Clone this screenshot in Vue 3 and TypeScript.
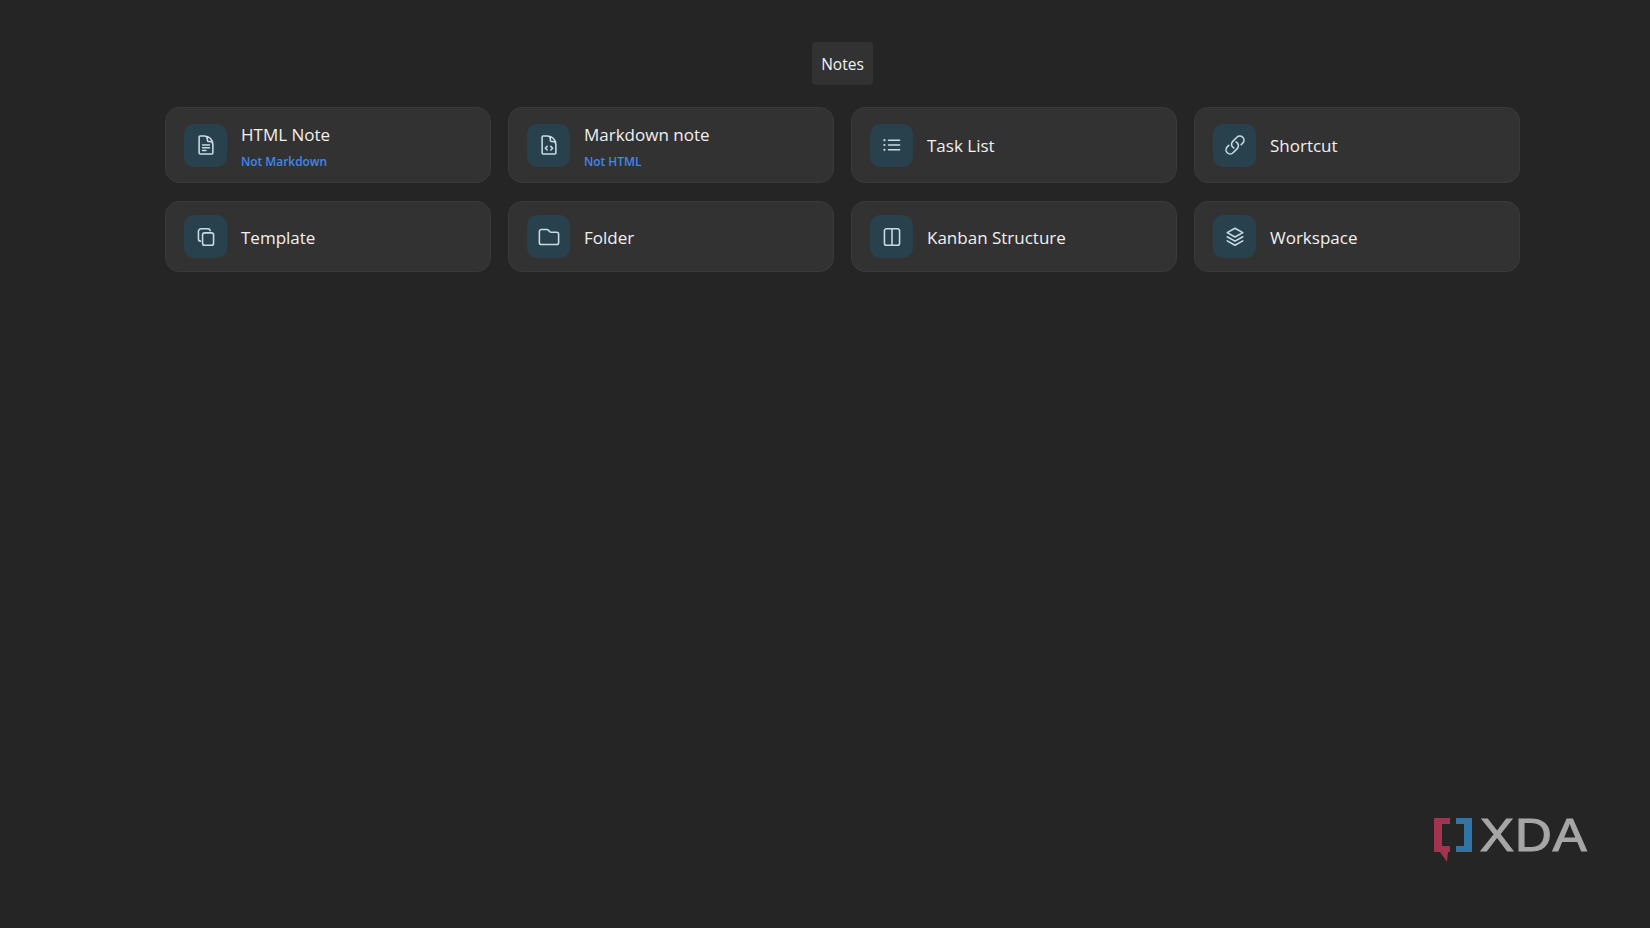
<script setup lang="ts">
type NoteType = {
  title: string;
  hint?: string;
  icon: string;
};

const noteTypes: NoteType[] = [
  {
    title: "HTML Note",
    hint: "Not Markdown",
    icon: "M19.5 14.25v-2.625a3.375 3.375 0 0 0-3.375-3.375h-1.5A1.125 1.125 0 0 1 13.5 7.125v-1.5a3.375 3.375 0 0 0-3.375-3.375H8.25m0 9.75h7.5m-7.5 3h7.5m-7.5 3H12M10.5 2.25H5.625c-.621 0-1.125.504-1.125 1.125v17.25c0 .621.504 1.125 1.125 1.125h12.75c.621 0 1.125-.504 1.125-1.125V11.25a9 9 0 0 0-9-9Z",
  },
  {
    title: "Markdown note",
    hint: "Not HTML",
    icon: "M19.5 14.25v-2.625a3.375 3.375 0 0 0-3.375-3.375h-1.5A1.125 1.125 0 0 1 13.5 7.125v-1.5a3.375 3.375 0 0 0-3.375-3.375H8.25M10.5 2.25H5.625c-.621 0-1.125.504-1.125 1.125v17.25c0 .621.504 1.125 1.125 1.125h12.75c.621 0 1.125-.504 1.125-1.125V11.25a9 9 0 0 0-9-9ZM10 13.5l-2 2 2 2M14 13.5l2 2-2 2",
  },
  {
    title: "Task List",
    icon: "M8.25 6.75h12M8.25 12h12m-12 5.25h12M3.75 6.75h.007v.008H3.75V6.75Zm.375 0a.375.375 0 1 1-.75 0 .375.375 0 0 1 .75 0ZM3.75 12h.007v.008H3.75V12Zm.375 0a.375.375 0 1 1-.75 0 .375.375 0 0 1 .75 0Zm-.375 5.25h.007v.008H3.75v-.008Zm.375 0a.375.375 0 1 1-.75 0 .375.375 0 0 1 .75 0Z",
  },
  {
    title: "Shortcut",
    icon: "M13.19 8.688a4.5 4.5 0 0 1 1.242 7.244l-4.5 4.5a4.5 4.5 0 0 1-6.364-6.364l1.757-1.757m13.35-.622 1.757-1.757a4.5 4.5 0 0 0-6.364-6.364l-4.5 4.5a4.5 4.5 0 0 0 1.242 7.244",
  },
  {
    title: "Template",
    icon: "M6 16.5A2.25 2.25 0 0 1 3.75 14.25V6A3 3 0 0 1 6.75 3h7.5a2.25 2.25 0 0 1 2.25 2.25M10.5 7.5H18a2.25 2.25 0 0 1 2.25 2.25V18.75A2.25 2.25 0 0 1 18 21h-7.5a2.25 2.25 0 0 1-2.25-2.25V9.75A2.25 2.25 0 0 1 10.5 7.5Z",
  },
  {
    title: "Folder",
    icon: "M13 6.3l-2.1-2.1a1.5 1.5 0 0 0-1.1-.45H3.75A2.25 2.25 0 0 0 1.5 6v12a2.25 2.25 0 0 0 2.25 2.25h16.5A2.25 2.25 0 0 0 22.5 18V9a2.25 2.25 0 0 0-2.25-2.25h-6.2a1.5 1.5 0 0 1-1.05-.45Z",
  },
  {
    title: "Kanban Structure",
    icon: "M12 3v18M6 3h12a2.25 2.25 0 0 1 2.25 2.25v13.5A2.25 2.25 0 0 1 18 21H6a2.25 2.25 0 0 1-2.25-2.25V5.25A2.25 2.25 0 0 1 6 3Z",
  },
  {
    title: "Workspace",
    icon: "M12 2.5l8.5 4.75L12 12 3.5 7.25ZM3.5 11.75l8.5 4.75 8.5-4.75M3.5 16.25l8.5 4.75 8.5-4.75",
  },
];
</script>

<template>
  <div class="page">
    <div class="tabs">
      <span class="tab">Notes</span>
    </div>
    <div class="type_grid">
      <div v-for="item in noteTypes" :key="item.title" class="type_card">
        <span class="type_icon">
          <svg viewBox="0 0 24 24" width="22" height="22" fill="none" stroke="currentColor" stroke-width="1.7" stroke-linecap="round" stroke-linejoin="round">
            <path :d="item.icon" />
          </svg>
        </span>
        <div class="type_text">
          <div class="type_title">{{ item.title }}</div>
          <div v-if="item.hint" class="type_hint">{{ item.hint }}</div>
        </div>
      </div>
    </div>

    <div class="watermark">
      <svg viewBox="0 0 40 46" width="40" height="46" class="watermark_mark">
        <path d="M1 1h16v6H9v22h8v6h-2l-1 10-7-10H1Z" fill="#a3344f" />
        <path d="M23 1h16v34H23v-6h8V7h-8Z" fill="#2f76a6" />
      </svg>
      <span class="watermark_text">XDA</span>
    </div>
  </div>
</template>

<style>
html,
body {
  background: #252525;
}
</style>

<style scoped>
.page {
  position: relative;
  box-sizing: border-box;
  height: 928px;
  padding: 42px 130px 0 165px;
  background: #252525;
  font-family: "Open Sans", "Noto Sans", sans-serif;
  overflow: hidden;
}
.tabs {
  display: flex;
  justify-content: center;
  margin-bottom: 22px;
}
.tab {
  display: flex;
  align-items: center;
  height: 43px;
  padding: 0 9px;
  border-radius: 4px;
  background: #323232;
  color: #f2f2f2;
  font-size: 15.5px;
}
.type_grid {
  display: grid;
  grid-template-columns: repeat(4, 326px);
  justify-content: space-between;
  row-gap: 18px;
}
.type_card {
  display: flex;
  align-items: center;
  gap: 14px;
  box-sizing: border-box;
  padding: 13px 18px;
  border: 1px solid #3a3a3a;
  border-radius: 14px;
  background: #323232;
}
.type_icon {
  display: flex;
  align-items: center;
  justify-content: center;
  flex: none;
  width: 43px;
  height: 43px;
  border-radius: 10px;
  background: #29404d;
  color: #c9dbe4;
}
.type_title {
  color: #f0f0f0;
  font-size: 17px;
  line-height: 28px;
}
.type_title:only-child {
  padding-top: 2px;
}
.type_hint {
  margin-bottom: -5px;
  color: #4387ea;
  font-size: 11.9px;
  font-weight: 600;
  line-height: 25px;
}
.watermark {
  position: absolute;
  left: 1433px;
  top: 817px;
  display: flex;
  gap: 7px;
}
.watermark_mark {
  flex: none;
}
.watermark_text {
  color: #a6a6a6;
  font-family: "Liberation Sans", sans-serif;
  font-size: 47px;
  line-height: 35px;
  letter-spacing: 1px;
  -webkit-text-stroke: 1.2px #a6a6a6;
  transform: scaleX(1.08);
  transform-origin: left center;
}
</style>
